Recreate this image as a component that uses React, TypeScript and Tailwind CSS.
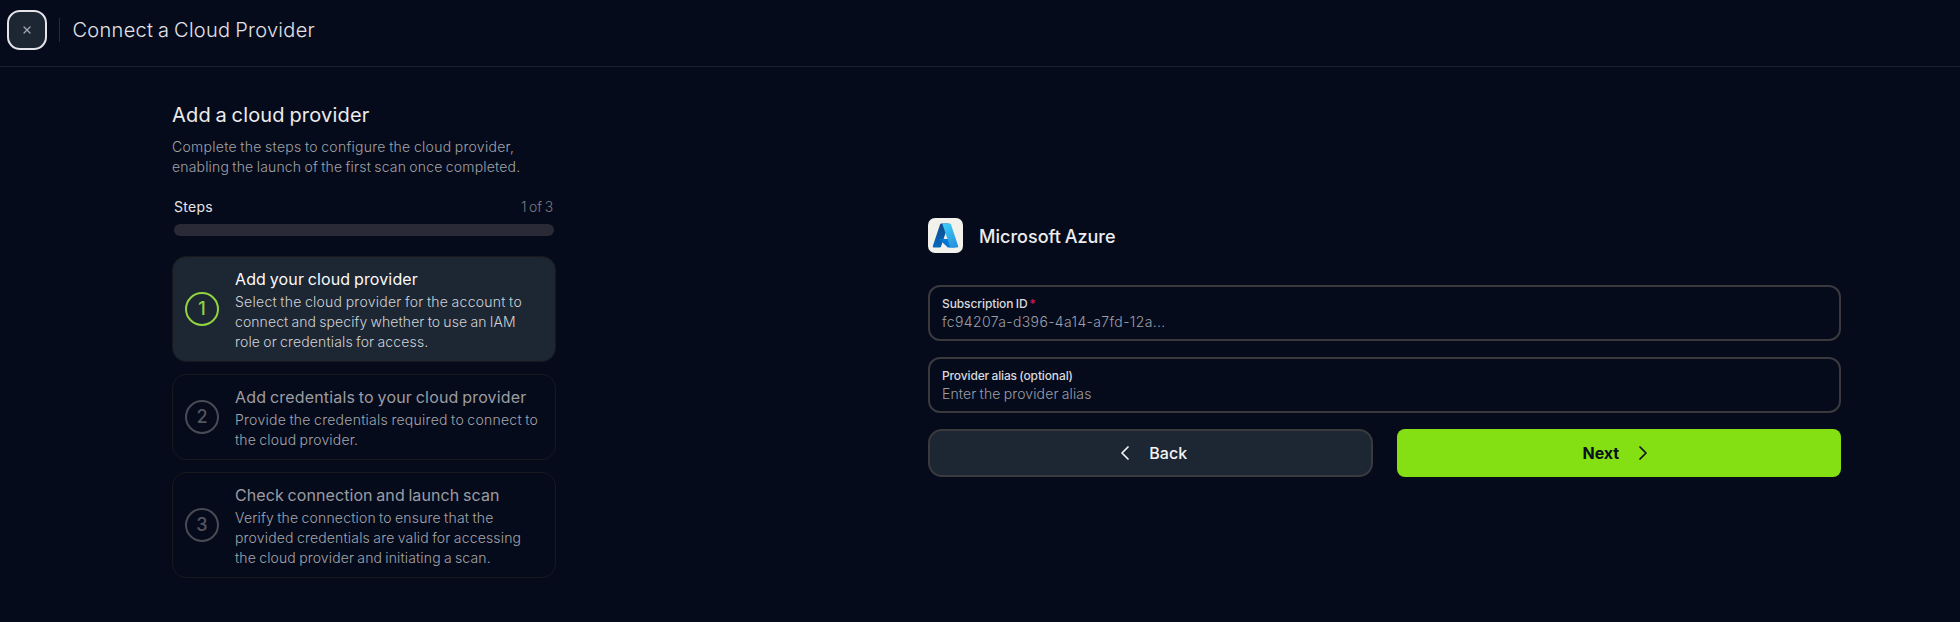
import { ChevronLeft, ChevronRight, X } from "lucide-react";

type Line = { text: string; tracking: string };

type Step = {
  title: Line;
  lines: Line[];
  height: string;
  active?: boolean;
};

const steps: Step[] = [
  {
    title: { text: "Add your cloud provider", tracking: "tracking-[0.14px]" },
    lines: [
      { text: "Select the cloud provider for the account to", tracking: "tracking-[0.26px]" },
      { text: "connect and specify whether to use an IAM", tracking: "tracking-[0.085px]" },
      { text: "role or credentials for access.", tracking: "tracking-[0.14px]" },
    ],
    height: "h-[106px]",
    active: true,
  },
  {
    title: { text: "Add credentials to your cloud provider", tracking: "tracking-[0.18px]" },
    lines: [
      { text: "Provide the credentials required to connect to", tracking: "tracking-[0.26px]" },
      { text: "the cloud provider.", tracking: "tracking-[0.18px]" },
    ],
    height: "h-[86px]",
  },
  {
    title: { text: "Check connection and launch scan", tracking: "tracking-[0.09px]" },
    lines: [
      { text: "Verify the connection to ensure that the", tracking: "tracking-[0.175px]" },
      { text: "provided credentials are valid for accessing", tracking: "tracking-[0.175px]" },
      { text: "the cloud provider and initiating a scan.", tracking: "tracking-[0.135px]" },
    ],
    height: "h-[106px]",
  },
];

function AzureLogo() {
  return (
    <svg width="35" height="35" viewBox="0 0 35 35" aria-hidden="true">
      <defs>
        <linearGradient id="azLeft" x1="0.6" y1="0" x2="0.3" y2="1">
          <stop offset="0" stopColor="#114a8b" />
          <stop offset="1" stopColor="#0669bc" />
        </linearGradient>
        <linearGradient id="azRight" x1="0.3" y1="0" x2="0.7" y2="1">
          <stop offset="0" stopColor="#3ccbf4" />
          <stop offset="1" stopColor="#2892df" />
        </linearGradient>
      </defs>
      <rect width="35" height="35" rx="7" fill="#f2f1ec" />
      <g transform="translate(3.6 3.6) scale(0.2896)">
        <path
          fill="url(#azLeft)"
          d="M33.338 6.544h26.038l-27.03 80.087a4.152 4.152 0 0 1-3.933 2.824H8.149a4.145 4.145 0 0 1-3.928-5.47L29.404 9.368a4.152 4.152 0 0 1 3.934-2.825z"
        />
        <path
          fill="#0078d4"
          d="M71.175 60.261h-41.29a1.911 1.911 0 0 0-1.305 3.309l26.532 24.764a4.171 4.171 0 0 0 2.846 1.121h23.38z"
        />
        <path
          fill="url(#azRight)"
          d="M66.595 9.364a4.145 4.145 0 0 0-3.928-2.82H33.648a4.146 4.146 0 0 1 3.928 2.82l25.184 74.62a4.146 4.146 0 0 1-3.928 5.472h29.02a4.146 4.146 0 0 0 3.927-5.472z"
        />
      </g>
    </svg>
  );
}

function StepCard({ step, index }: { step: Step; index: number }) {
  return (
    <li
      className={`flex items-center rounded-[14px] border border-[#17191d] pl-3 ${step.height} ${
        step.active ? "bg-[#1d2633]" : ""
      }`}
    >
      <span
        className={`flex size-[34px] shrink-0 items-center justify-center rounded-full border-2 text-lg leading-none font-medium ${
          step.active ? "border-[#92d43f] text-[#92d43f]" : "border-[#484b53] text-[#53565e]"
        }`}
      >
        {index + 1}
      </span>
      <div className="ml-4 pt-px whitespace-nowrap">
        <h3
          className={`text-base leading-6 ${step.title.tracking} ${
            step.active ? "text-[#fafafa]" : "text-[#9b9ca2]"
          }`}
        >
          {step.title.text}
        </h3>
        <div
          className={`pt-px text-sm leading-5 font-light ${step.active ? "text-[#d0d2d6]" : "text-[#a3a5ab]"}`}
        >
          {step.lines.map((line) => (
            <p key={line.text} className={line.tracking}>
              {line.text}
            </p>
          ))}
        </div>
      </div>
    </li>
  );
}

export default function App() {
  return (
    <div className="flex h-[622px] w-full flex-col overflow-hidden bg-[#060b1c] font-['Inter',sans-serif] **:[word-spacing:-0.06em]">
      <header className="flex h-[67px] shrink-0 items-start border-b border-[#1c222b] pt-2.5 pl-[7px]">
        <button className="flex size-10 items-center justify-center rounded-[13px] border-2 border-[#e4e4ea] bg-[#1d2633] text-[#a4a9b2]">
          <X size={12} strokeWidth={2.5} />
        </button>
        <div className="mt-2 ml-3 h-6 w-px bg-[#272b37]" />
        <h1 className="mt-1.5 ml-[12.5px] text-xl leading-7 font-light tracking-[0.3px] whitespace-nowrap text-[#e2e3e6]">
          Connect a Cloud Provider
        </h1>
      </header>

      <main className="flex flex-1">
        <section className="ml-[172px] w-96 pt-[34px]">
          <h2 className="text-xl leading-7 tracking-[0.19px] text-[#ececee]">Add a cloud provider</h2>
          <div className="mt-2 text-sm leading-5 font-light whitespace-nowrap text-[#a0a2a8]">
            <p className="tracking-[0.28px]">Complete the steps to configure the cloud provider,</p>
            <p className="tracking-[0.175px]">enabling the launch of the first scan once completed.</p>
          </div>
          <div className="mt-5 flex justify-between pr-[3px] pl-0.5 text-sm leading-5">
            <span className="tracking-[0.29px] text-[#e4e4e7]">Steps</span>
            <span className="font-light tracking-[-0.2px] text-[#7a7c84]">1 of 3</span>
          </div>
          <div className="mx-0.5 mt-[7px] h-3 rounded-full bg-[#292a36]" />
          <ol className="mt-5 flex flex-col gap-3">
            {steps.map((step, i) => (
              <StepCard key={step.title.text} step={step} index={i} />
            ))}
          </ol>
        </section>

        <section className="ml-[372px] w-[913px] pt-[151px]">
          <div className="flex items-center gap-4">
            <AzureLogo />
            <span className="pt-0.5 text-lg leading-7 font-medium tracking-[0.02px] text-[#ececee]">
              Microsoft Azure
            </span>
          </div>

          <div className="mt-8 flex flex-col gap-4">
            <div className="h-14 rounded-xl border-2 border-[#3a393e] px-3 pt-2">
              <div className="text-xs leading-[18px] font-medium tracking-[-0.1px] text-[#d9dade]">
                Subscription ID
                <span className="ml-0.5 text-[#d5174f]">*</span>
              </div>
              <div className="-mt-px text-sm leading-5 font-light tracking-[0.36px] text-[#9b9fa8]">
                fc94207a-d396-4a14-a7fd-12a...
              </div>
            </div>
            <div className="h-14 rounded-xl border-2 border-[#3a393e] px-3 pt-2">
              <div className="text-xs leading-[18px] font-medium tracking-[-0.13px] text-[#d9dade]">
                Provider alias (optional)
              </div>
              <div className="-mt-px text-sm leading-5 font-light tracking-[0.12px] text-[#9b9fa8]">
                Enter the provider alias
              </div>
            </div>
            <div className="grid h-12 grid-cols-2 gap-6 text-base leading-6">
              <button className="flex items-center justify-center gap-3 rounded-[14px] border-2 border-[#3a393e] bg-[#1d2633] font-medium tracking-[0.1px] text-[#f4f4f5]">
                <ChevronLeft size={24} strokeWidth={1.75} />
                Back
              </button>
              <button className="flex items-center justify-center gap-3 rounded-lg bg-[#84df13] font-bold tracking-[-0.1px] text-[#0a101c]">
                Next
                <ChevronRight size={24} strokeWidth={1.75} />
              </button>
            </div>
          </div>
        </section>
      </main>
    </div>
  );
}
